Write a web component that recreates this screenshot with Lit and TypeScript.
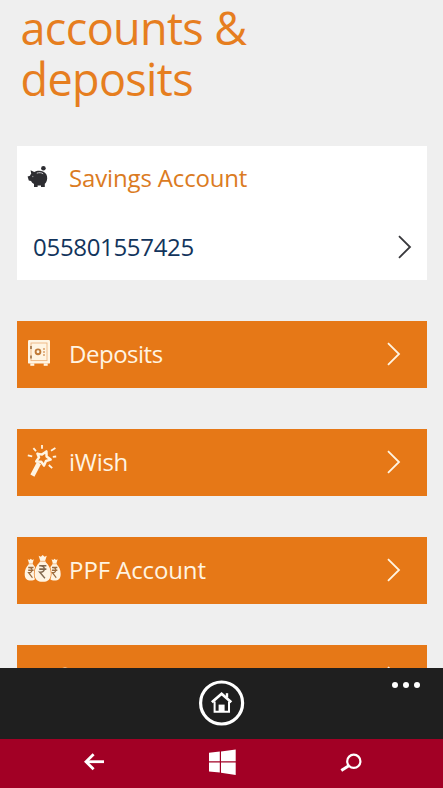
import { LitElement, html, css, svg } from "lit";
import { customElement, property } from "lit/decorators.js";

const piggy = svg`
  <circle cx="15.4" cy="1.2" r="2.3" fill="#2d2d31"/>
  <path fill="#2d2d31" d="M2.6 3.2 L6.2 5 C8.6 3.7 12.4 3.4 15 4.5 C18 5.8 19.4 8.2 19.2 11.4 C19 14 18 15.8 16.8 16.8 V20 H13 V18.4 H9.6 V20 H6 V17 C4.6 16.2 3.6 15.2 3 14 L.8 13.4 L-.4 9.6 L2 8.8 C2.2 8 2.8 7.2 3.2 6.8 Z"/>
  <path d="M8.8 6.2 C11.2 5.3 13.6 5.6 15.2 6.8" fill="none" stroke="#c9c9cc" stroke-width="1"/>
  <circle cx="4.8" cy="9.5" r=".7" fill="#8d8d90"/>`;

const safe = svg`
  <rect x="0" y="0" width="22" height="23.6" rx="1.2" fill="#fff4e2"/>
  <rect x="2.3" y="23.4" width="4" height="2.4" fill="#fff4e2"/>
  <rect x="15.7" y="23.4" width="4" height="2.4" fill="#fff4e2"/>
  <rect x="3" y="3" width="16" height="17.6" fill="none" stroke="#edb582" stroke-width=".9"/>
  <path d="M3 6v3M3 15.5v3" stroke="#9b7146" stroke-width="1.6"/>
  <circle cx="10" cy="11.8" r="2.4" fill="#fff4e2" stroke="#c07a38" stroke-width="1.9"/>
  <path d="M16 8v8" stroke="#d08a4c" stroke-width="1.2" stroke-dasharray="2 1"/>`;

const wand = svg`
  <g fill="none" stroke="#fff4e2">
    <path d="M11 18 L4.4 30.6" stroke-width="4.6"/>
    <path d="M9.4 8.6 L14 9.6 L18.4 6.4 L18.6 11.4 L22.6 14.6 L18 16 L16 20.6 L13.2 16.8 L8.2 16.4 L11 12.4 Z" stroke-width="2.5" stroke-linejoin="round"/>
    <path d="M14 0v3.8M5.4 3.2l2.6 3M-.2 10.4l4.4 1M23 5.8l4.4-2.8M24.8 11.8l3.4-.3M20.8 20l3.4 3.2" stroke-width="1.8"/>
  </g>`;

const bag = (rupee: string) => svg`
  <path fill="#fff4e2" d="M-4 -11.6 L-1.8 -10.8 L0 -12.2 L1.8 -10.8 L4 -11.6 L2.4 -7.4 L3 -6.2 C6 -3.8 8 -.8 8 3.4 C8 8.2 5 10.2 0 10.2 C-5 10.2 -8 8.2 -8 3.4 C-8 -.8 -6 -3.8 -3 -6.2 L-2.4 -7.4 Z"/>
  <path fill="none" stroke="#e9a264" stroke-width=".7" d="M-2.8 -6.9 H2.8"/>
  <path fill="none" stroke="${rupee}" stroke-width="1.4" d="M-3.4 -3.2 H3.6 M-3.4 -.4 H3.6 M-2.6 -3.2 C3 -3.6 3 2.6 -2.8 2.2 L2.2 7.2"/>`;

const bags = svg`
  <g transform="translate(5.8 13.6) scale(.76 .98)">${bag("#9a6a3c")}</g>
  <g transform="translate(29.6 13.6) scale(.76 .98)">${bag("#9a6a3c")}</g>
  <g transform="translate(17.7 12.6) scale(1.02 1.2)">
    <path fill="none" stroke="#e67817" stroke-width="1.4" d="M-3 -6.2 H3 C6 -3.8 8 -.8 8 3.4 C8 8.2 5 10.2 0 10.2 C-5 10.2 -8 8.2 -8 3.4 C-8 -.8 -6 -3.8 -3 -6.2 Z"/>
    ${bag("#80684e")}
  </g>`;

const coin = svg`<circle cx="8" cy="8" r="7.5" fill="#fff4e2"/>`;

const chevron = html`<svg class="chev" width="14" height="24" viewBox="0 0 14 24">
  <path d="M1 1.2 L12 12 L1 22.8" fill="none" stroke="currentColor" stroke-width="1.8"/>
</svg>`;

@customElement("account-tile")
export class AccountTile extends LitElement {
  @property() label = "";
  @property() kind = "";

  static styles = css`
    :host { display: block; }
    .tile {
      box-sizing: border-box;
      height: 66.6px;
      padding: 0 26px 1.4px 8px;
      background: #e67817;
      color: #fff4e2;
      display: flex;
      align-items: center;
      font: 400 24px/32px "Open Sans", "Noto Sans", sans-serif;
    }
    .icon { width: 44.5px; height: 34px; flex: none; }
    .icon svg { display: block; overflow: visible; }
    .safe svg { margin: 3px 0 0 3px; }
    .wand svg { margin: 0 0 0 3px; }
    .bags svg { margin: 4px 0 0 0; }
    .coin svg { margin: 6px 0 0 32px; }
    .label { flex: 1; white-space: nowrap; }
    .safe + .label { letter-spacing: -0.5px; }
    .wand + .label { letter-spacing: -0.3px; }
    .bags + .label { letter-spacing: -0.12px; }
    .chev { display: block; }
  `;

  render() {
    const art: Record<string, unknown> = { safe, wand, bags, coin };
    return html`<div class="tile">
      <div class="icon ${this.kind}"><svg width="37" height="32" viewBox="0 0 37 32">${art[this.kind]}</svg></div>
      <span class="label">${this.label}</span>
      ${chevron}
    </div>`;
  }
}

@customElement("app-root")
export class AppRoot extends LitElement {
  static styles = css`
    :host {
      display: flex;
      flex-direction: column;
      height: 788px;
      overflow: hidden;
      background: #efefef;
      font-family: "Open Sans", "Noto Sans", sans-serif;
    }
    .page { height: 668px; flex: none; overflow: hidden; }
    h1 {
      margin: 0;
      height: 145.5px;
      padding: 1.5px 0 0 20.5px;
      box-sizing: border-box;
      font-size: 45px;
      line-height: 51px;
      font-weight: 400;
      letter-spacing: -0.65px;
      color: #e67e1f;
      white-space: nowrap;
    }
    .list { display: flex; flex-direction: column; gap: 41.5px; padding: 0 16.4px 0 16.6px; }
    .card { background: #fff; height: 134px; }
    .head { display: flex; height: 63px; padding-left: 11.5px; align-items: center; color: #db7b22; font-size: 24px; }
    .head svg { width: 41px; height: 24px; margin-top: 3px; overflow: visible; }
    .title { letter-spacing: -0.16px; white-space: nowrap; }
    .number {
      display: flex; align-items: center; justify-content: space-between;
      height: 70px; padding: 6px 14.5px 0 16.5px; box-sizing: border-box;
      color: #12345c; font-size: 24px; letter-spacing: -0.33px;
    }
    .chev { display: block; color: #38383c; }
    .bar { height: 71px; flex: none; background: #1f1f1f; display: grid; grid-template-columns: 1fr 46px 1fr; align-items: center; }
    .home { grid-column: 2; display: block; margin-top: -2px; }
    .more { display: flex; gap: 5px; justify-self: end; align-self: start; margin: 14px 23px 0 0; }
    .more i { width: 6px; height: 6px; border-radius: 50%; background: #fff; }
    .nav { height: 49px; flex: none; background: #a20025; }
    .nav svg { display: block; }
  `;

  render() {
    return html`
      <div class="page">
        <h1>accounts &amp;<br />deposits</h1>
        <div class="list">
          <div class="card">
            <div class="head">
              <svg viewBox="0 0 41 24">${piggy}</svg>
              <span class="title">Savings Account</span>
            </div>
            <div class="number"><span>055801557425</span>${chevron}</div>
          </div>
          <account-tile label="Deposits" kind="safe"></account-tile>
          <account-tile label="iWish" kind="wand"></account-tile>
          <account-tile label="PPF Account" kind="bags"></account-tile>
          <account-tile kind="coin"></account-tile>
        </div>
      </div>
      <div class="bar">
        <svg class="home" width="46" height="46" viewBox="0 0 46 46" fill="none" stroke="#fff">
          <circle cx="22.6" cy="23" r="21" stroke-width="3.2"/>
          <path d="M12.9 22.3 L22.6 13.8 L32.3 22.3" stroke-width="2.8"/>
          <path d="M15.6 21.5 V31.8 H30 V21.5" stroke-width="2"/>
          <path d="M28 17.5 V13.2" stroke-width="2.4"/>
          <rect x="19.6" y="24.6" width="6" height="7" fill="#fff" stroke="none"/>
        </svg>
        <div class="more"><i></i><i></i><i></i></div>
      </div>
      <div class="nav">
        <svg width="443" height="49" viewBox="0 0 443 49">
          <g fill="none" stroke="#fff">
            <path d="M104 22.7 H86" stroke-width="2.8"/>
            <path d="M93.6 15.2 L86 22.7 L93.6 30.2" stroke-width="2.8"/>
            <circle cx="353.8" cy="22.3" r="6.6" stroke-width="2.2"/>
            <path d="M349.2 26.6 L341.3 31.6" stroke-width="3"/>
          </g>
          <path fill="#fff" d="M209 13.8 L219.8 12.6 V22.3 H209 Z M221 12.4 L235.7 10.6 V22.3 H221 Z M209 23.5 H219.8 V33.6 L209 32.4 Z M221 23.5 H235.7 V36 L221 33.8 Z"/>
        </svg>
      </div>`;
  }
}
